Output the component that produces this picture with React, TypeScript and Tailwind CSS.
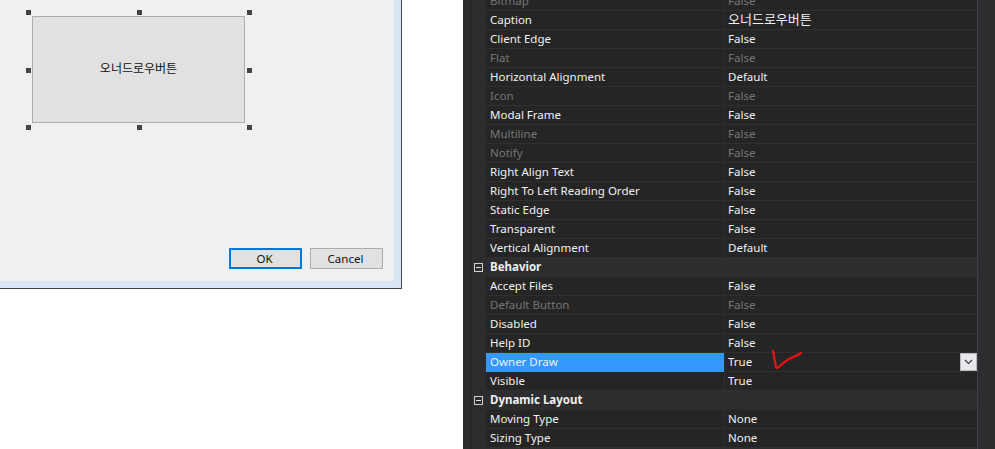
import React from "react";

type Row = { name: string; value?: string; dim?: boolean; header?: boolean; selected?: boolean; korean?: boolean };

const rows: Row[] = [
  { name: "Bitmap", value: "False", dim: true },
  { name: "Caption", value: "오너드로우버튼", korean: true },
  { name: "Client Edge", value: "False" },
  { name: "Flat", value: "False", dim: true },
  { name: "Horizontal Alignment", value: "Default" },
  { name: "Icon", value: "False", dim: true },
  { name: "Modal Frame", value: "False" },
  { name: "Multiline", value: "False", dim: true },
  { name: "Notify", value: "False", dim: true },
  { name: "Right Align Text", value: "False" },
  { name: "Right To Left Reading Order", value: "False" },
  { name: "Static Edge", value: "False" },
  { name: "Transparent", value: "False" },
  { name: "Vertical Alignment", value: "Default" },
  { name: "Behavior", header: true },
  { name: "Accept Files", value: "False" },
  { name: "Default Button", value: "False", dim: true },
  { name: "Disabled", value: "False" },
  { name: "Help ID", value: "False" },
  { name: "Owner Draw", value: "True", selected: true },
  { name: "Visible", value: "True" },
  { name: "Dynamic Layout", header: true },
  { name: "Moving Type", value: "None" },
  { name: "Sizing Type", value: "None" },
];

function Handle({ className }: { className: string }) {
  return <div className={`absolute w-[5px] h-[5px] bg-[#444444] ${className}`} />;
}

function PropertyRow({ row }: { row: Row }) {
  if (row.header) {
    return (
      <div className="flex h-[19px] items-center bg-[#2d2d30] w-[506px]">
        <div className="w-[15px] flex justify-start pl-[3px] shrink-0">
          <div className="w-[9px] h-[9px] border border-[#d0d0d0] flex items-center justify-center">
            <div className="w-[5px] h-px bg-[#e0e0e0]" />
          </div>
        </div>
        <span className="font-bold text-[#f1f1f1] pl-[4px] pb-px">{row.name}</span>
      </div>
    );
  }
  const color = row.dim ? "text-[#757575]" : "text-[#f1f1f1]";
  return (
    <div className="flex h-[19px] w-[506px]">
      <div className="w-[15px] shrink-0 bg-[#2d2d30]" />
      <div className={`w-[238px] shrink-0 pl-[4px] leading-[17px] h-[19px] ${row.selected ? "bg-[#3399ff] text-[#e8f2ff]" : `bg-[#252526] border-b border-[#2f2f32] ${color}`}`}>
        {row.name}
      </div>
      <div className="w-px shrink-0 bg-[#2f2f32]" />
      <div className={`relative flex-1 pl-[3px] h-[19px] bg-[#252526] border-b border-[#2f2f32] ${color} ${row.korean ? "text-[13px] leading-[16px]" : "leading-[17px]"}`}>
        {row.value}
        {row.selected && (
          <>
            <svg className="absolute left-[47px] top-[-3px]" width="32" height="22" viewBox="0 0 32 22" fill="none">
              <path d="M1 1 C2 6 3 12 4 17 C5 19 7 17 9 15 C12 12 14 11 17 9 C21 7 25 6 29 3" stroke="#ee1111" strokeWidth="2.2" strokeLinecap="round" strokeLinejoin="round" />
            </svg>
            <div className="absolute right-0 top-0 w-[17px] h-[18px] bg-[#e8e8ec] border border-[#b8b8b8] flex items-center justify-center">
              <svg width="9" height="6" viewBox="0 0 9 6" fill="none">
                <path d="M1 1 L4.5 4.5 L8 1" stroke="#3a3a3a" strokeWidth="1.2" />
              </svg>
            </div>
          </>
        )}
      </div>
    </div>
  );
}

export default function App() {
  return (
    <div className="flex w-[995px] h-[449px] overflow-hidden bg-white text-[11.5px] font-['Noto_Sans','Noto_Sans_CJK_KR',sans-serif]">
      <div className="w-[402px] h-[289px] shrink-0 bg-[#d9e6f3] border-r border-b border-[#454545] pr-[7px] pb-[7px]">
        <div className="relative w-[394px] h-[281px] bg-[#f0f0f0] flex flex-col">
          <Handle className="left-[26px] top-[10px]" />
          <Handle className="left-[137px] top-[10px]" />
          <Handle className="left-[247px] top-[10px]" />
          <Handle className="left-[26px] top-[68px]" />
          <Handle className="left-[247px] top-[68px]" />
          <Handle className="left-[26px] top-[125px]" />
          <Handle className="left-[137px] top-[125px]" />
          <Handle className="left-[247px] top-[125px]" />
          <div className="ml-[32px] mt-[16px] w-[213px] h-[107px] bg-[#e1e1e1] border border-[#adadad] flex items-center justify-center pb-[2px] text-[#111111] text-[12px]">
            오너드로우버튼
          </div>
          <div className="mt-auto mb-[12px] mr-[11px] flex justify-end gap-[8px] text-[#111111]">
            <div className="w-[73px] h-[21px] bg-[#e1e1e1] border-2 border-[#0078d7] flex items-center justify-center pr-[2px]">OK</div>
            <div className="w-[73px] h-[21px] bg-[#e1e1e1] border border-[#adadad] flex items-center justify-center pr-[2px]">Cancel</div>
          </div>
        </div>
      </div>
      <div className="ml-[61px] w-[532px] h-[449px] bg-[#2d2d30] flex overflow-hidden">
        <div className="w-[8px] shrink-0 bg-[#2d2d30] border-r border-[#232325]" />
        <div className="w-[507px] shrink-0 border-r border-[#3f3f46] -mt-[8px]">
          {rows.map((r) => (
            <PropertyRow key={r.name} row={r} />
          ))}
        </div>
      </div>
    </div>
  );
}
